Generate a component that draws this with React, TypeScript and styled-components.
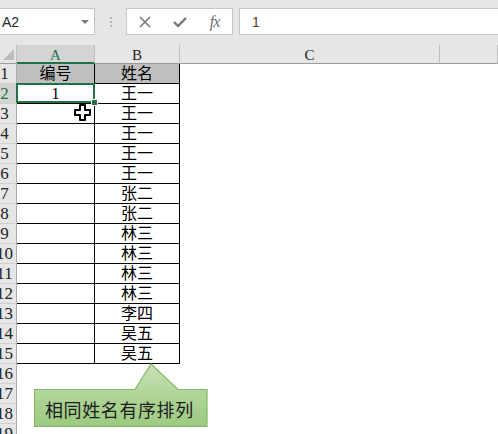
import React from "react";
import styled, { createGlobalStyle, css } from "styled-components";

const GlobalStyle = createGlobalStyle`
  html, body {
    margin: 0;
    padding: 0;
    background: #ffffff;
    overflow: hidden;
  }
  body {
    width: 498px;
    height: 434px;
  }
`;

const Page = styled.div`
  width: 498px;
  height: 434px;
  overflow: hidden;
  background: #ffffff;
`;

const Toolbar = styled.div`
  display: flex;
  align-items: flex-start;
  height: 45px;
  padding-top: 8px;
  box-sizing: border-box;
  background: #e6e6e6;
`;

const NameBox = styled.div`
  width: 95px;
  height: 27px;
  box-sizing: border-box;
  background: #ffffff;
  border: 1px solid #c6c6c6;
  border-left: none;
  display: flex;
  align-items: center;
  justify-content: space-between;
  padding: 0 5px 0 2px;
  font: 14px "Liberation Sans", Arial, sans-serif;
  color: #262626;
`;

const Caret = styled.span`
  width: 0;
  height: 0;
  border-left: 4px solid transparent;
  border-right: 4px solid transparent;
  border-top: 4px solid #7a7a7a;
`;

const Grip = styled.div`
  width: 31px;
  height: 27px;
  display: flex;
  flex-direction: column;
  align-items: center;
  justify-content: center;
  gap: 2px;
`;

const GripDot = styled.span`
  width: 2px;
  height: 2px;
  background: #b4b4b4;
`;

const FormulaButtons = styled.div`
  width: 107px;
  height: 27px;
  box-sizing: border-box;
  background: #ffffff;
  border: 1px solid #c6c6c6;
  display: grid;
  grid-template-columns: repeat(3, 1fr);
  align-items: center;
  justify-items: center;
  color: #777777;
`;

const Fx = styled.span`
  font: italic 16px "Liberation Serif", "Times New Roman", serif;
  color: #6e6e6e;
  letter-spacing: -1px;
`;

const FormulaInput = styled.div`
  flex: 1;
  margin-left: 6px;
  height: 27px;
  box-sizing: border-box;
  background: #ffffff;
  border: 1px solid #c6c6c6;
  border-right: none;
  display: flex;
  align-items: center;
  padding-left: 12px;
  font: 14px "Liberation Sans", Arial, sans-serif;
  color: #5a3a1e;
`;

const Sheet = styled.div`
  position: relative;
  display: grid;
  grid-template-columns: 17px 78px 85px 260px 1fr;
  grid-template-rows: 19px repeat(19, 20px);
  font-family: "Liberation Serif", "Noto Sans CJK SC", serif;
`;

const Corner = styled.div`
  position: relative;
  background: #e6e6e6;
  border-right: 1px solid #c0c0c0;
  border-bottom: 1px solid #9b9b9b;
  box-sizing: border-box;

  &::after {
    content: "";
    position: absolute;
    right: 2px;
    bottom: 3px;
    width: 0;
    height: 0;
    border-left: 11px solid transparent;
    border-bottom: 11px solid #bdbdbd;
  }
`;

const ColHead = styled.div<{ $active?: boolean }>`
  box-sizing: border-box;
  background: #e6e6e6;
  border-right: 1px solid #c0c0c0;
  border-bottom: 1px solid #9b9b9b;
  display: flex;
  align-items: center;
  justify-content: center;
  font-size: 15px;
  color: #222222;
  padding-top: 2px;

  ${(p) =>
    p.$active &&
    css`
      background: #d4d4d4;
      color: #217346;
      border-bottom: 2px solid #217346;
      padding-top: 3px;
    `}
`;

const RowHead = styled.div<{ $active?: boolean }>`
  box-sizing: border-box;
  background: ${(p) => (p.$active ? "#d4d4d4" : "#e6e6e6")};
  color: ${(p) => (p.$active ? "#217346" : "#222222")};
  border-right: 1px solid #ababab;
  border-bottom: 1px solid #cfcfcf;
  overflow: hidden;
  display: flex;
  align-items: center;
  font-size: 17px;
`;

const RowNum = styled.span`
  flex: none;
  width: 9px;
  display: flex;
  justify-content: center;
  white-space: nowrap;
`;

const Cell = styled.div<{ $kind: "head" | "data" | "blank"; $selected?: boolean }>`
  position: relative;
  box-sizing: border-box;
  display: flex;
  align-items: center;
  justify-content: center;
  font-family: "Liberation Serif", "Noto Sans CJK SC", serif;
  font-size: 16px;
  line-height: 20px;
  color: #000000;
  white-space: nowrap;

  ${(p) =>
    p.$kind !== "blank" &&
    css`
      border-right: 1px solid #000000;
      border-bottom: 1px solid #000000;
    `}
  ${(p) =>
    p.$kind === "head" &&
    css`
      background: #bfbfbf;
    `}
  ${(p) =>
    p.$selected &&
    css`
      &::after {
        content: "";
        position: absolute;
        left: -1px;
        top: -1px;
        right: -1px;
        bottom: 0;
        border: 2px solid #217346;
      }
      &::before {
        content: "";
        position: absolute;
        right: -4px;
        bottom: -3px;
        width: 5px;
        height: 5px;
        background: #217346;
        border: 1px solid #ffffff;
        z-index: 2;
      }
    `}
`;

const Cursor = styled.svg`
  position: absolute;
  left: 74px;
  top: 59px;
  z-index: 3;
`;

const Callout = styled.div`
  position: absolute;
  left: 34px;
  top: 317px;
  width: 174px;
  height: 66px;
  z-index: 3;
`;

const CalloutShape = styled.svg`
  position: absolute;
  left: 0;
  top: 0;
`;

const CalloutText = styled.div`
  position: absolute;
  left: 11px;
  top: 28px;
  height: 37px;
  display: flex;
  align-items: center;
  font: 18px "Noto Sans CJK SC", sans-serif;
  color: #1c1c1c;
  letter-spacing: 0.6px;
`;

const names = [
  "王一",
  "王一",
  "王一",
  "王一",
  "王一",
  "张二",
  "张二",
  "林三",
  "林三",
  "林三",
  "林三",
  "李四",
  "吴五",
  "吴五",
];

function App() {
  const rows = Array.from({ length: 19 }, (_, i) => i + 1);

  return (
    <Page>
      <GlobalStyle />
      <Toolbar>
        <NameBox>
          A2
          <Caret />
        </NameBox>
        <Grip>
          <GripDot />
          <GripDot />
          <GripDot />
        </Grip>
        <FormulaButtons>
          <svg width="12" height="12" viewBox="0 0 12 12">
            <path d="M1 1 L11 11 M11 1 L1 11" stroke="#777" strokeWidth="1.6" fill="none" />
          </svg>
          <svg width="14" height="12" viewBox="0 0 14 12">
            <path d="M1 6 L5 10 L13 2" stroke="#777" strokeWidth="2.4" fill="none" />
          </svg>
          <Fx>fx</Fx>
        </FormulaButtons>
        <FormulaInput>1</FormulaInput>
      </Toolbar>

      <Sheet>
        <Corner />
        <ColHead $active>A</ColHead>
        <ColHead>B</ColHead>
        <ColHead>C</ColHead>
        <ColHead />

        {rows.map((r) => {
          const inTable = r <= 15;
          const kind = r === 1 ? "head" : inTable ? "data" : "blank";
          let a = "";
          let b = "";
          if (r === 1) {
            a = "编号";
            b = "姓名";
          } else if (inTable) {
            b = names[r - 2];
            if (r === 2) a = "1";
          }
          return (
            <React.Fragment key={r}>
              <RowHead $active={r === 2}>
                <RowNum>{r}</RowNum>
              </RowHead>
              <Cell $kind={kind} $selected={r === 2}>
                {a}
              </Cell>
              <Cell $kind={kind}>{b}</Cell>
              <Cell $kind="blank" />
              <Cell $kind="blank" />
            </React.Fragment>
          );
        })}

        <Cursor width="17" height="17" viewBox="0 0 17 17">
          <path
            d="M6 1 H11 V6 H16 V11 H11 V16 H6 V11 H1 V6 H6 Z"
            fill="#ffffff"
            stroke="#000000"
            strokeWidth="2"
            strokeLinejoin="round"
          />
        </Cursor>

        <Callout>
          <CalloutShape width="174" height="66" viewBox="0 0 174 66">
            <defs>
              <linearGradient id="calloutFill" x1="0" y1="0" x2="0" y2="1">
                <stop offset="0" stopColor="#cbe3bb" />
                <stop offset="0.45" stopColor="#b1d69a" />
                <stop offset="1" stopColor="#9cc980" />
              </linearGradient>
            </defs>
            <path
              d="M0.5 27.5 H101 L117 2 L144 27.5 H173 V64.5 H0.5 Z"
              fill="url(#calloutFill)"
              stroke="#82b864"
              strokeWidth="1.2"
            />
          </CalloutShape>
          <CalloutText>相同姓名有序排列</CalloutText>
        </Callout>
      </Sheet>
    </Page>
  );
}

export default App;
